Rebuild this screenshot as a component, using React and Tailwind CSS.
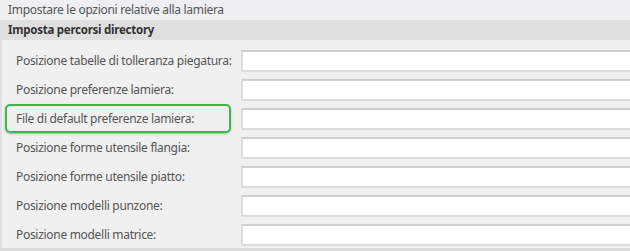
const ROWS = [
  'Posizione tabelle di tolleranza piegatura:',
  'Posizione preferenze lamiera:',
  'File di default preferenze lamiera:',
  'Posizione forme utensile flangia:',
  'Posizione forme utensile piatto:',
  'Posizione modelli punzone:',
  'Posizione modelli matrice:',
]

function Row({ label, highlight }) {
  return (
    <div className="flex h-[22px] items-center">
      <div className="relative flex h-full w-[239px] shrink-0 items-center pl-[14px]">
        <span className="whitespace-nowrap">{label}</span>
        {highlight && (
          <div className="absolute left-[3px] top-[-4px] h-[29px] w-[226px] rounded-[5px] border-2 border-[#3db54a] shadow-[0_1px_2px_rgba(0,0,0,0.25)]" />
        )}
      </div>
      <div className="h-full flex-1 border-2 border-r-0 border-[#dcdcdc] border-t-[#cfcfcf] bg-white" />
    </div>
  )
}

export default function App() {
  return (
    <div className="h-[251px] w-[630px] overflow-hidden bg-[#f0f0f0] text-[12px] tracking-[-0.3px] text-[#555] font-['Noto_Sans',sans-serif]">
      <div className="h-[20px] bg-[#eeeff1] pl-2 leading-[20px]">Impostare le opzioni relative alla lamiera</div>
      <div className="h-[20px] bg-[#dfdfdf] pl-2 text-[11.5px] font-bold leading-[20px] tracking-[-0.25px] text-[#333]">
        Imposta percorsi directory
      </div>
      <div className="flex h-[208px] flex-col gap-[7px] border-l-2 border-[#e2e2e2] pt-[10px]">
        {ROWS.map((r, i) => (
          <Row key={r} label={r} highlight={i === 2} />
        ))}
      </div>
      <div className="h-[3px] bg-[#dcdcdc]" />
    </div>
  )
}
